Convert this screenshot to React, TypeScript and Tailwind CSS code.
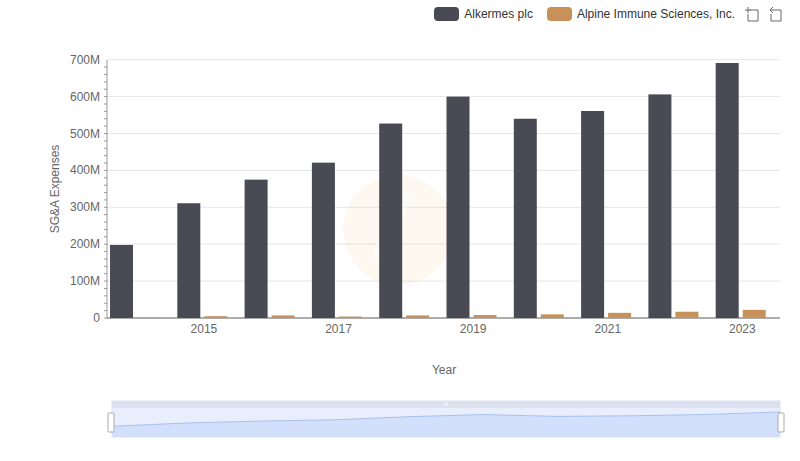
export default function App() {
  const dark = [198, 311, 375, 421, 527, 600, 540, 561, 606, 691];
  const orange = [1, 5, 7, 4, 7, 8, 10, 14, 17, 22];
  const x0 = 107, gw = 67.3, y0 = 318, k = 0.369;
  const ticks = [0, 100, 200, 300, 400, 500, 600, 700];
  const pts = dark.map((v, i) => [112 + (668 * i) / 9, 432 - (v / 691) * 20]);
  const line = pts.map((p, i) => (i ? "L" : "M") + p[0].toFixed(1) + " " + p[1].toFixed(1)).join(" ");
  return (
    <div className="w-[800px] h-[461px] bg-white relative" style={{ fontFamily: '"Liberation Sans", Arial, sans-serif' }}>
      <div className="flex justify-end items-center gap-2 pt-[5px] pr-[17px] text-[12px] text-[#333]">
        <div className="flex items-center gap-[5px]"><span className="w-[25px] h-[14px] rounded-[4px] bg-[#4a4a55]" />Alkermes plc</div>
        <div className="flex items-center gap-[5px] ml-[6px]"><span className="w-[25px] h-[14px] rounded-[4px] bg-[#c8915a]" />Alpine Immune Sciences, Inc.</div>
        <svg width="40" height="16" viewBox="0 0 40 16" fill="none" stroke="#666" strokeWidth="1">
          <path d="M2 4h6M5 1v6M7 4h8v11H5V8" />
          <path d="M27 4h11v11H28V8M27 4l3-3M27 4l3 3" />
        </svg>
      </div>
      <svg className="absolute left-0 top-0" width="800" height="461">
        {ticks.map((t) => (
          <g key={t}>
            <line x1={x0} x2={780} y1={y0 - t * k} y2={y0 - t * k} stroke="#e6e6e6" />
            <text x={100} y={y0 - t * k + 4} textAnchor="end" fontSize="12" fill="#666">{t === 0 ? "0" : t + "M"}</text>
          </g>
        ))}
        {Array.from({ length: 35 }).map((_, i) => (
          <line key={i} x1={104} x2={107} y1={y0 - i * 20 * k} y2={y0 - i * 20 * k} stroke="#999" />
        ))}
        <line x1={x0} x2={x0} y1={60} y2={y0} stroke="#999" />
        <line x1={x0} x2={780} y1={y0} y2={y0} stroke="#666" />
        <g opacity="0.08" fill="#e8a23c">
          <circle cx="398" cy="230" r="55" />
        </g>
        <g fill="white" opacity="0.9">
          <path d="M370 260 L395 195 L412 195 L387 260Z" opacity="0.6" />
        </g>
        {dark.map((v, i) => {
          const gs = x0 + gw * i;
          return (
            <g key={i}>
              <rect x={gs + 3} y={y0 - v * k} width={23} height={v * k} fill="#4a4a55" />
              <rect x={gs + 30} y={y0 - orange[i] * k} width={23} height={orange[i] * k} fill="#c8915a" />
            </g>
          );
        })}
        {[1, 3, 5, 7, 9].map((i) => (
          <text key={i} x={x0 + gw * (i + 0.5) - 4} y={333} textAnchor="middle" fontSize="12" fill="#666">{2014 + i}</text>
        ))}
        <text x={444} y={374} textAnchor="middle" fontSize="12" fill="#666">Year</text>
        <text transform="translate(59 189) rotate(-90)" textAnchor="middle" fontSize="12" fill="#666">SG&amp;A Expenses</text>
        <rect x={112} y={401} width={668} height={36} fill="#e8eefb" stroke="#dde3f0" />
        <rect x={112} y={401} width={668} height={7} fill="#dbe1ef" />
        <path d={line + " L780 437 L112 437Z"} fill="#d3e0fb" />
        <path d={line} fill="none" stroke="#a9c0ef" />
        <rect x={108} y={413} width={6} height={19} rx="1" fill="white" stroke="#aaa" />
        <rect x={778} y={413} width={6} height={19} rx="1" fill="white" stroke="#aaa" />
        <text x={446} y={406} fontSize="5" fill="#fff" textAnchor="middle">III</text>
      </svg>
    </div>
  );
}
